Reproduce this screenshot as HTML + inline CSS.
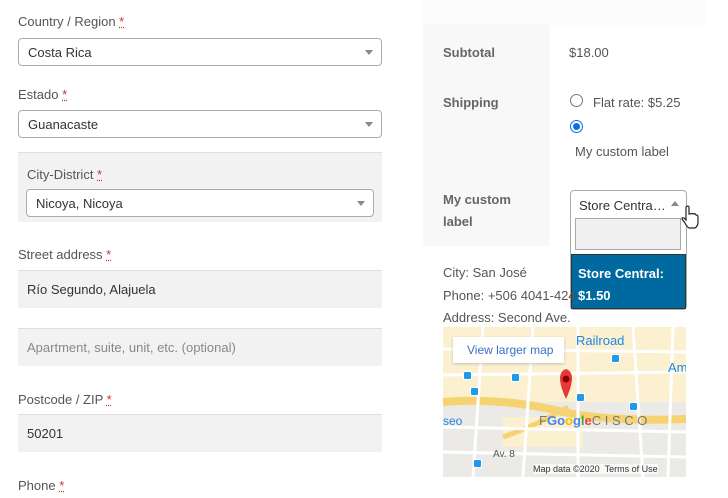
<!DOCTYPE html>
<html><head><meta charset="utf-8"><style>
*{margin:0;padding:0;box-sizing:border-box}
body{width:728px;height:498px;background:#fff;position:relative;overflow:hidden;font-family:"Liberation Sans",sans-serif;font-size:13px;color:#555}
.a{position:absolute;white-space:nowrap}
.req{color:#c33;text-decoration:underline dotted #c33}
.sel{position:absolute;border:1px solid #aaa;border-radius:4px;background:#fff;color:#333;padding-left:9px;line-height:27px}
.sel:after{content:"";position:absolute;right:8px;top:11px;border:4px solid transparent;border-top:5px solid #888}
.inp{position:absolute;left:18px;width:364px;height:38px;background:#f2f2f2;border-top:1px solid #ddd;padding-left:9px;line-height:38px;color:#333}
.b{font-weight:bold;color:#666}
.bus{position:absolute;width:9px;height:9px;background:#1e9be8;border-radius:2px;border:1.5px solid #fff}
</style></head><body>
<div class="a" style="left:18px;top:14px">Country / Region <span class="req">*</span></div>
<div class="sel" style="left:18px;top:38px;width:364px;height:28px">Costa Rica</div>
<div class="a" style="left:18px;top:87px">Estado <span class="req">*</span></div>
<div class="sel" style="left:18px;top:110px;width:364px;height:28px">Guanacaste</div>
<div class="a" style="left:18px;top:152px;width:364px;height:70px;background:#f2f2f2;border-top:1px solid #e0e0e0"></div>
<div class="a" style="left:27px;top:167px">City-District <span class="req">*</span></div>
<div class="sel" style="left:26px;top:189px;width:348px;height:28px">Nicoya, Nicoya</div>
<div class="a" style="left:18px;top:247px">Street address <span class="req">*</span></div>
<div class="inp" style="top:270px">Río Segundo, Alajuela</div>
<div class="inp" style="top:328px;color:#888">Apartment, suite, unit, etc. (optional)</div>
<div class="a" style="left:18px;top:392px">Postcode / ZIP <span class="req">*</span></div>
<div class="inp" style="top:414px">50201</div>
<div class="a" style="left:18px;top:478px">Phone <span class="req">*</span></div>

<div class="a" style="left:423px;top:0;width:282px;height:25px;background:#fbfbfb"></div>
<div class="a" style="left:423px;top:25px;width:127px;height:221px;background:#f8f8f8"></div>
<div class="a b" style="left:443px;top:45px">Subtotal</div>
<div class="a" style="left:569px;top:45px">$18.00</div>
<div class="a b" style="left:443px;top:95px">Shipping</div>
<div class="a" style="left:570px;top:94px;width:13px;height:13px;border:1px solid #777;border-radius:50%"></div>
<div class="a" style="left:593px;top:95px">Flat rate: $5.25</div>
<div class="a" style="left:570px;top:120px;width:13px;height:13px;border:1px solid #0a6fe0;border-radius:50%;background:#fff"><div style="margin:2px;width:7px;height:7px;border-radius:50%;background:#0a6fe0"></div></div>
<div class="a" style="left:575px;top:144px">My custom label</div>
<div class="a b" style="left:443px;top:189px;line-height:22px;white-space:normal;width:80px">My custom label</div>
<div class="a" style="left:570px;top:190px;width:117px;height:120px;border:1px solid #aaa;border-radius:4px;background:#fff"></div>
<div class="a" style="left:579px;top:198px;color:#333">Store Centra…</div>
<div class="a" style="left:671px;top:201px;border:4px solid transparent;border-bottom:5px solid #888;border-top:0"></div>
<div class="a" style="left:575px;top:218px;width:106px;height:32px;border:1px solid #aaa;background:#f0f0f0"></div>
<div class="a" style="left:571px;top:254px;width:115px;height:55px;background:#00699f;border:1px solid #333;color:#fff;font-weight:bold;padding:8px 6px;line-height:22px;white-space:normal">Store Central: $1.50</div>
<svg class="a" style="left:681px;top:205px" width="18" height="24" viewBox="0 0 18 24"><path d="M5 2 q2-2 3 0 v7 h1 q2-1 3 0 q2-1 3 1 q2 0 2 2 v5 q0 4-3 6 h-6 q-2-1-4-5 l-3-4 q0-2 2-1 l2 2z" fill="#fff" stroke="#222" stroke-width="1.2"/></svg>
<div class="a" style="left:443px;top:265px">City: San José</div>
<div class="a" style="left:443px;top:288px">Phone: +506 4041-424</div>
<div class="a" style="left:443px;top:310px">Address: Second Ave.</div>
<div class="a" style="left:443px;top:327px;width:243px;height:150px;background:#ebe8e3;overflow:hidden">
<svg width="243" height="150" style="position:absolute;left:0;top:0">
<rect x="0" y="0" width="243" height="150" fill="#eceae6"/>
<rect x="0" y="0" width="243" height="75" fill="#fbf0cf"/>
<rect x="60" y="90" width="80" height="30" fill="#fbf0cf"/>
<path d="M0 75 Q60 70 120 85 Q170 95 243 92" stroke="#f5d370" stroke-width="8" fill="none"/>
<path d="M60 110 Q90 100 125 80" stroke="#f5d370" stroke-width="5" fill="none"/>
<path d="M0 48 L243 45 M0 100 L243 105 M0 125 L243 130 M40 0 L30 150 M90 0 L80 150 M135 0 L135 150 M190 0 L200 150 M230 0 L225 150 M0 22 L243 25" stroke="#fff" stroke-width="3" fill="none"/>
<path d="M123 72 q-12 -26 0 -30 q12 4 0 30z" fill="#e53935"/>
<circle cx="123" cy="52" r="3.5" fill="#8b0000"/>
<text x="133" y="18" font-size="13" fill="#1e88e5" font-family="Liberation Sans">Railroad</text>
<text x="225" y="45" font-size="13" fill="#1e88e5" font-family="Liberation Sans">Ambo</text>
<text x="0" y="98" font-size="12" fill="#1e88e5" font-family="Liberation Sans">seo</text>
<text x="50" y="130" font-size="10" fill="#555" font-family="Liberation Sans">Av. 8</text>
</svg>
<div class="bus" style="left:20px;top:44px"></div><div class="bus" style="left:68px;top:46px"></div>
<div class="bus" style="left:27px;top:60px"></div><div class="bus" style="left:133px;top:66px"></div>
<div class="bus" style="left:186px;top:75px"></div><div class="bus" style="left:168px;top:27px"></div>
<div class="bus" style="left:30px;top:132px"></div>
<div class="a" style="left:10px;top:10px;width:111px;height:26px;background:#fff;color:#3a6fc4;font-size:12px;padding:6px 14px;box-shadow:0 1px 3px rgba(0,0,0,.2)">View larger map</div>
<div class="a" style="left:96px;top:86px;font-size:13px;color:#777">F<b style="color:#4285f4">Go</b><b style="color:#fbbc05">o</b><b style="color:#4285f4">g</b><b style="color:#34a853">l</b><b style="color:#ea4335">e</b>C I S C O</div>
<div class="a" style="left:90px;top:137px;font-size:9px;color:#333;background:rgba(255,255,255,.7)">Map data ©2020 &nbsp;Terms of Use</div>
</div>
</body></html>
